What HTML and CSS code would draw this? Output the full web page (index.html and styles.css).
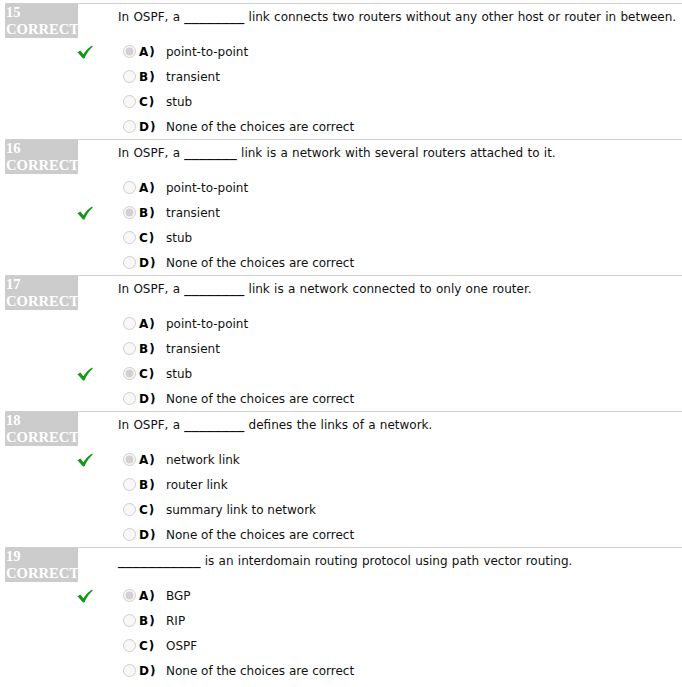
FILE: index.html
```html
<!DOCTYPE html>
<html>
<head>
<meta charset="utf-8">
<link rel="stylesheet" href="styles.css">
</head>
<body>
<div class="quiz">

<div class="q">
  <div class="side">
    <div class="badge">15<br>CORRECT</div>
    <div class="mark mark-1"><svg viewBox="0 0 16 14" width="16" height="14"><path d="M0.5 7.2 L3.4 5.6 L6.4 9.2 C8.6 5.6 11.6 2.6 15.2 0.4 L15.8 1.4 C12.4 4.4 9.4 8.6 7.4 13.6 L6 13.6 Z" fill="#129812"/></svg></div>
  </div>
  <div class="main">
    <div class="text">In OSPF, a <span class="blank">________</span> link connects two routers without any other host or router in between.</div>
    <div class="opts">
      <div class="opt"><input type="radio" disabled checked><b class="l">A)</b><span>point-to-point</span></div>
      <div class="opt"><input type="radio" disabled><b class="l">B)</b><span>transient</span></div>
      <div class="opt"><input type="radio" disabled><b class="l">C)</b><span>stub</span></div>
      <div class="opt"><input type="radio" disabled><b class="l">D)</b><span>None of the choices are correct</span></div>
    </div>
  </div>
</div>

<div class="q">
  <div class="side">
    <div class="badge">16<br>CORRECT</div>
    <div class="mark mark-2"><svg viewBox="0 0 16 14" width="16" height="14"><path d="M0.5 7.2 L3.4 5.6 L6.4 9.2 C8.6 5.6 11.6 2.6 15.2 0.4 L15.8 1.4 C12.4 4.4 9.4 8.6 7.4 13.6 L6 13.6 Z" fill="#129812"/></svg></div>
  </div>
  <div class="main">
    <div class="text">In OSPF, a <span class="blank">_______</span> link is a network with several routers attached to it.</div>
    <div class="opts">
      <div class="opt"><input type="radio" disabled><b class="l">A)</b><span>point-to-point</span></div>
      <div class="opt"><input type="radio" disabled checked><b class="l">B)</b><span>transient</span></div>
      <div class="opt"><input type="radio" disabled><b class="l">C)</b><span>stub</span></div>
      <div class="opt"><input type="radio" disabled><b class="l">D)</b><span>None of the choices are correct</span></div>
    </div>
  </div>
</div>

<div class="q">
  <div class="side">
    <div class="badge">17<br>CORRECT</div>
    <div class="mark mark-3"><svg viewBox="0 0 16 14" width="16" height="14"><path d="M0.5 7.2 L3.4 5.6 L6.4 9.2 C8.6 5.6 11.6 2.6 15.2 0.4 L15.8 1.4 C12.4 4.4 9.4 8.6 7.4 13.6 L6 13.6 Z" fill="#129812"/></svg></div>
  </div>
  <div class="main">
    <div class="text">In OSPF, a <span class="blank">________</span> link is a network connected to only one router.</div>
    <div class="opts">
      <div class="opt"><input type="radio" disabled><b class="l">A)</b><span>point-to-point</span></div>
      <div class="opt"><input type="radio" disabled><b class="l">B)</b><span>transient</span></div>
      <div class="opt"><input type="radio" disabled checked><b class="l">C)</b><span>stub</span></div>
      <div class="opt"><input type="radio" disabled><b class="l">D)</b><span>None of the choices are correct</span></div>
    </div>
  </div>
</div>

<div class="q">
  <div class="side">
    <div class="badge">18<br>CORRECT</div>
    <div class="mark mark-1"><svg viewBox="0 0 16 14" width="16" height="14"><path d="M0.5 7.2 L3.4 5.6 L6.4 9.2 C8.6 5.6 11.6 2.6 15.2 0.4 L15.8 1.4 C12.4 4.4 9.4 8.6 7.4 13.6 L6 13.6 Z" fill="#129812"/></svg></div>
  </div>
  <div class="main">
    <div class="text">In OSPF, a <span class="blank">________</span> defines the links of a network.</div>
    <div class="opts">
      <div class="opt"><input type="radio" disabled checked><b class="l">A)</b><span>network link</span></div>
      <div class="opt"><input type="radio" disabled><b class="l">B)</b><span>router link</span></div>
      <div class="opt"><input type="radio" disabled><b class="l">C)</b><span>summary link to network</span></div>
      <div class="opt"><input type="radio" disabled><b class="l">D)</b><span>None of the choices are correct</span></div>
    </div>
  </div>
</div>

<div class="q">
  <div class="side">
    <div class="badge">19<br>CORRECT</div>
    <div class="mark mark-1"><svg viewBox="0 0 16 14" width="16" height="14"><path d="M0.5 7.2 L3.4 5.6 L6.4 9.2 C8.6 5.6 11.6 2.6 15.2 0.4 L15.8 1.4 C12.4 4.4 9.4 8.6 7.4 13.6 L6 13.6 Z" fill="#129812"/></svg></div>
  </div>
  <div class="main">
    <div class="text"><span class="blank">___________</span> is an interdomain routing protocol using path vector routing.</div>
    <div class="opts">
      <div class="opt"><input type="radio" disabled checked><b class="l">A)</b><span>BGP</span></div>
      <div class="opt"><input type="radio" disabled><b class="l">B)</b><span>RIP</span></div>
      <div class="opt"><input type="radio" disabled><b class="l">C)</b><span>OSPF</span></div>
      <div class="opt"><input type="radio" disabled><b class="l">D)</b><span>None of the choices are correct</span></div>
    </div>
  </div>
</div>

</div>
</body>
</html>
```
FILE: styles.css
```css
html, body {
  margin: 0;
  padding: 0;
  background: #fff;
}
body {
  font-family: "DejaVu Sans", Verdana, sans-serif;
  font-size: 12px;
  color: #111;
}
.quiz {
  padding-top: 3px;
  padding-left: 5px;
}
.q {
  display: flex;
  height: 136px;
  box-sizing: border-box;
  border-top: 1px solid #cfcfcf;
}
.side {
  width: 113px;
  flex: none;
}
.badge {
  display: inline-block;
  background: #cccccc;
  color: #fff;
  font-family: "Liberation Serif", "Times New Roman", serif;
  font-weight: bold;
  font-size: 14.6px;
  line-height: 17px;
  padding-left: 1px;
  width: 72px;
  white-space: nowrap;
}
.mark {
  margin-left: 72px;
  height: 14px;
}
.mark svg { display: block; }
.mark-1 { margin-top: 7px; }
.mark-2 { margin-top: 32px; }
.mark-3 { margin-top: 57px; }
.main {
  flex: 1;
}
.text {
  margin-top: 5px;
  line-height: 16px;
  white-space: nowrap;
  word-spacing: 0.45px;
}
.blank {
  font-size: 15px;
  line-height: 0;
  position: relative;
  top: -1px;
}
.opts {
  margin-top: 14px;
}
.opt {
  height: 25px;
  display: flex;
  align-items: center;
}
.opt input {
  margin: 0 3px 0 5px;
  width: 13px;
  height: 13px;
}
.l {
  display: inline-block;
  width: 27px;
  color: #000;
  letter-spacing: 1px;
}
```
